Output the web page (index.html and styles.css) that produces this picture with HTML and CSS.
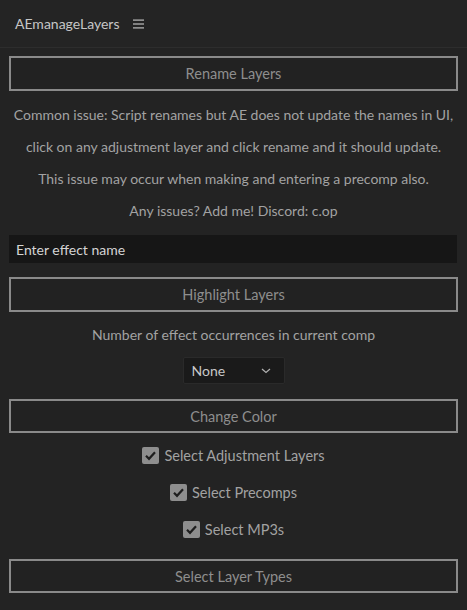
FILE: index.html
```html
<!DOCTYPE html>
<html>
<head>
<meta charset="utf-8">
<link rel="stylesheet" href="styles.css">
</head>
<body>
<div class="panel">
  <div class="header">
    <span class="title">AEmanageLayers</span>
    <svg class="menu" width="11" height="10" viewBox="0 0 11 10"><rect x="0" y="0.5" width="11" height="1.2" fill="#bdbdbd"/><rect x="0" y="4.4" width="11" height="1.2" fill="#bdbdbd"/><rect x="0" y="8.3" width="11" height="1.2" fill="#bdbdbd"/></svg>
  </div>
  <div class="content">
    <div class="btn">Rename Layers</div>
    <div class="info">
      <p>Common issue: Script renames but AE does not update the names in UI,</p>
      <p>click on any adjustment layer and click rename and it should update.</p>
      <p>This issue may occur when making and entering a precomp also.</p>
      <p>Any issues? Add me! Discord: c.op</p>
    </div>
    <div class="input">Enter effect name</div>
    <div class="btn btn-hl">Highlight Layers</div>
    <p class="count">Number of effect occurrences in current comp</p>
    <div class="select-row">
      <div class="select">
        <span>None</span>
        <svg width="10" height="6" viewBox="0 0 10 6"><path d="M1 1 L5 4.5 L9 1" fill="none" stroke="#b0b0b0" stroke-width="1.2"/></svg>
      </div>
    </div>
    <div class="btn btn-cc">Change Color</div>
    <div class="checks">
      <div class="check"><span class="box"><svg width="17" height="17" viewBox="0 0 17 17"><path d="M4 8.8 L7 11.8 L13 5.2" fill="none" stroke="#1e1e1e" stroke-width="2.2"/></svg></span>Select Adjustment Layers</div>
      <div class="check"><span class="box"><svg width="17" height="17" viewBox="0 0 17 17"><path d="M4 8.8 L7 11.8 L13 5.2" fill="none" stroke="#1e1e1e" stroke-width="2.2"/></svg></span>Select Precomps</div>
      <div class="check"><span class="box"><svg width="17" height="17" viewBox="0 0 17 17"><path d="M4 8.8 L7 11.8 L13 5.2" fill="none" stroke="#1e1e1e" stroke-width="2.2"/></svg></span>Select MP3s</div>
    </div>
    <div class="btn btn-lt">Select Layer Types</div>
  </div>
</div>
</body>
</html>
```
FILE: styles.css
```css
html, body {
  margin: 0;
  padding: 0;
  background: #232323;
}
body {
  font-family: Lato, "Open Sans", sans-serif;
  font-size: 14px;
  width: 467px;
  height: 610px;
  overflow: hidden;
}
.panel {
  width: 467px;
}
.header {
  height: 48px;
  box-sizing: border-box;
  border-bottom: 1px solid #2d2d2d;
  display: flex;
  align-items: center;
  padding-left: 15px;
  background: #242424;
}
.title {
  color: #c6c6c6;
  font-size: 14px;
}
.menu {
  margin-left: 14px;
  margin-top: 1px;
}
.content {
  padding: 8px 9px 0 9px;
  display: flex;
  flex-direction: column;
}
.btn {
  height: 35px;
  box-sizing: border-box;
  border: 2px solid #8a8a8a;
  background: #222222;
  color: #8e8e8e;
  display: flex;
  align-items: center;
  justify-content: center;
  font-size: 14.5px;
}
.info {
  margin-top: 8px;
  text-align: center;
  color: #a2a2a2;
}
.info p, .count {
  margin: 0;
  height: 32px;
  line-height: 32px;
  white-space: nowrap;
}
.input {
  margin-top: 8px;
  height: 28px;
  width: 448px;
  box-sizing: border-box;
  background: #161616;
  color: #d4d4d4;
  padding-left: 7px;
  display: flex;
  align-items: center;
}
.btn-hl { margin-top: 14px; }
.count {
  margin-top: 7px;
  text-align: center;
  color: #a2a2a2;
}
.select-row {
  margin-top: 6px;
  display: flex;
  justify-content: center;
}
.select {
  width: 102px;
  height: 27px;
  box-sizing: border-box;
  background: #1a1a1a;
  border: 1px solid #2a2a2a;
  border-radius: 2px;
  display: flex;
  align-items: center;
  justify-content: space-between;
  padding: 0 13px 0 8px;
  color: #c8c8c8;
}
.btn-cc { margin-top: 15px; height: 34px; }
.checks {
  margin-top: 4px;
  display: flex;
  flex-direction: column;
  align-items: center;
}
.check {
  height: 37px;
  display: flex;
  align-items: center;
  color: #a2a2a2;
  font-size: 14.5px;
}
.box {
  width: 17px;
  height: 17px;
  background: #8e8e8e;
  border-radius: 2px;
  margin-right: 5px;
  display: flex;
}
.btn-lt { margin-top: 11px; height: 34px; }
```
